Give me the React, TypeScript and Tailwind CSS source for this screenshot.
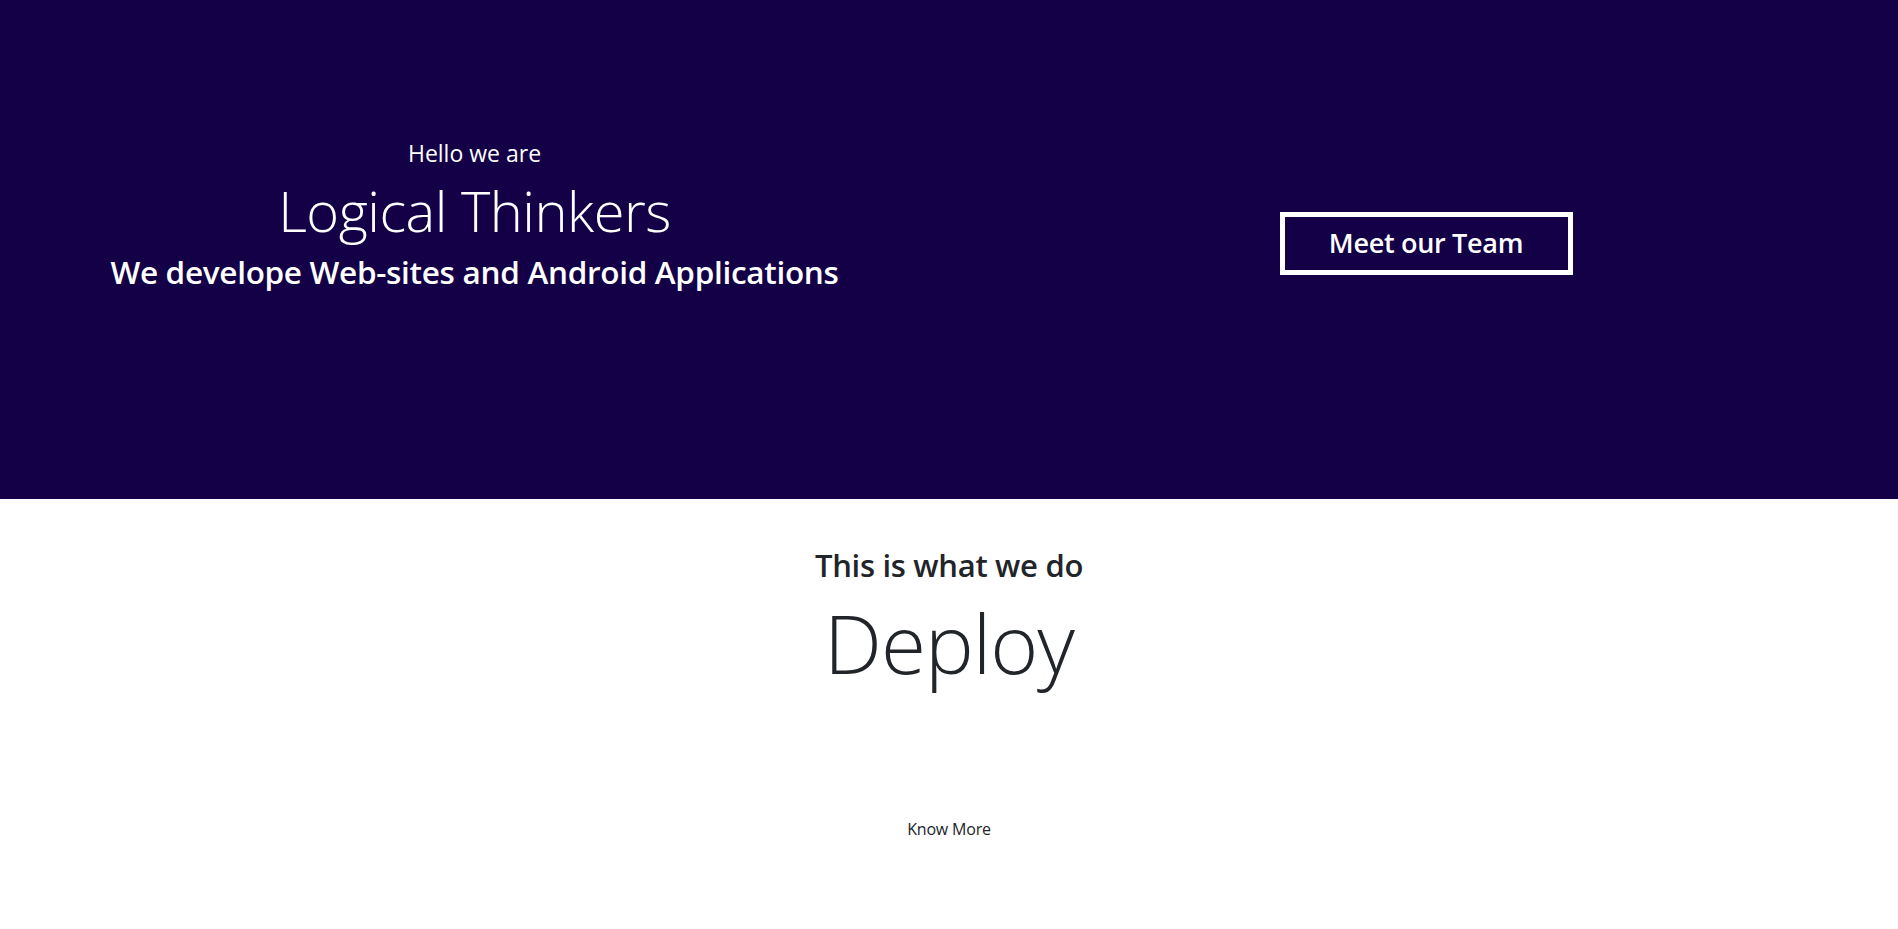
const font = { fontFamily: '"Open Sans", "Noto Sans", sans-serif' };

export default function App() {
  return (
    <div className="min-h-[929px] bg-white" style={font}>
      {/* Hero */}
      <section className="grid h-[499px] grid-cols-2 bg-[#140046] text-white">
        <div className="flex flex-col items-center pt-[137px] text-center">
          <p className="text-[23px] leading-[32px] font-medium">Hello we are</p>
          <h1 className="mt-[8px] text-[56px] leading-[66px] font-light tracking-[-0.5px]">
            Logical Thinkers
          </h1>
          <h2 className="mt-[8px] text-[31.5px] leading-[42px] font-semibold tracking-[-0.3px]">
            We develope Web-sites and Android Applications
          </h2>
        </div>
        <div className="flex justify-center pt-[212px] pl-[5px]">
          <button className="h-[63px] w-[293px] border-[5px] border-white text-[27px] font-semibold tracking-[-0.3px]">
            Meet our Team
          </button>
        </div>
      </section>

      {/* What we do */}
      <section className="flex flex-col items-center pt-[46px] text-[#212529]">
        <h3 className="text-[31px] leading-[40px] font-semibold tracking-[-0.3px]">
          This is what we do
        </h3>
        <p className="mt-[7px] text-[82px] leading-[100px] font-light tracking-[-1px]">
          Deploy
        </p>
        <a href="#" className="mt-[125px] text-[16px] leading-[24px] tracking-[-0.2px] text-[#212529]">
          Know More
        </a>
      </section>
    </div>
  );
}
